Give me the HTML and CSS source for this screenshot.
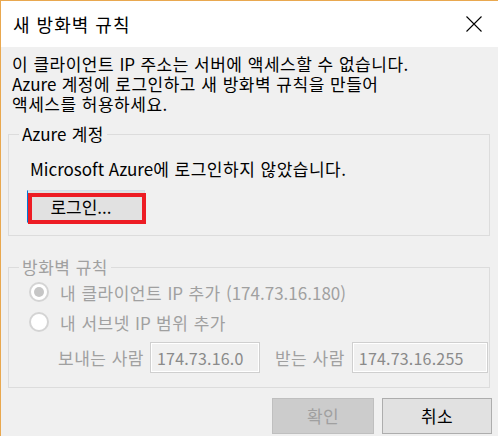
FILE: index.html
```html
<!DOCTYPE html>
<html lang="ko">
<head>
<meta charset="utf-8">
<title>새 방화벽 규칙</title>
<link rel="stylesheet" href="styles.css">
</head>
<body>
<div class="window">
  <div class="titlebar">
    <span class="title">새 방화벽 규칙</span>
    <svg class="close" width="16" height="16" viewBox="0 0 16 16" aria-label="닫기"><path d="M0.5 0.5 L15.5 15.5 M15.5 0.5 L0.5 15.5" stroke="#000" stroke-width="1.1" fill="none"/></svg>
  </div>
  <div class="content">
    <p class="msg">이 클라이언트 <span class="en">IP</span> 주소는 서버에 액세스할 수 없습니다.<br><span class="en">Azure</span> 계정에 로그인하고 새 방화벽 규칙을 만들어<br>액세스를 허용하세요.</p>
    <fieldset class="group account">
      <legend><span class="en">Azure</span> 계정</legend>
      <div class="status"><span class="en">Microsoft Azure</span>에 로그인하지 않았습니다.</div>
      <div class="login-wrap">
        <button class="btn login" type="button">로그인...</button>
        <span class="mark"></span>
      </div>
    </fieldset>
    <fieldset class="group rules">
      <legend>방화벽 규칙</legend>
      <div class="radio"><span class="dot checked"></span><span>내 클라이언트 <span class="en">IP</span> 추가 <span class="en">(174.73.16.180)</span></span></div>
      <div class="radio"><span class="dot"></span><span>내 서브넷 <span class="en">IP</span> 범위 추가</span></div>
      <div class="range">
        <span class="lbl">보내는 사람</span><span class="field from">174.73.16.0</span>
        <span class="lbl to-lbl">받는 사람</span><span class="field to">174.73.16.255</span>
      </div>
    </fieldset>
    <div class="actions">
      <button class="btn ok" type="button" disabled>확인</button>
      <button class="btn cancel" type="button">취소</button>
    </div>
  </div>
</div>
</body>
</html>
```

FILE: styles.css
```css
* { box-sizing: border-box; }
html, body { margin: 0; padding: 0; }
body {
  font-family: "Noto Sans CJK KR", "Noto Sans", sans-serif;
  font-size: 17px;
  letter-spacing: 0.5px;
  color: #000;
  background: #f0f0f0;
}
.en { letter-spacing: 0; }
.window {
  height: 436px;
  border-top: 1px solid #e9a84f;
  border-left: 1px solid #e9a84f;
  background: #f0f0f0;
  overflow: hidden;
}
.titlebar {
  height: 46px;
  background: #fff;
  display: flex;
  align-items: center;
  justify-content: space-between;
  padding: 0 16px 0 12px;
}
.title {
  font-size: 18px;
  letter-spacing: 1px;
  line-height: 24px;
}
.close { display: block; }
.content {
  padding: 0 8px 0 7px;
}
.msg {
  margin: 0;
  padding: 7px 0 0 4px;
  line-height: 20px;
}
.group {
  margin: 10px 0 0 0;
  border: 1px solid #dcdcdc;
  padding: 0 0 12px 18px;
  min-width: 0;
}
.group legend {
  line-height: 20px;
  padding: 0 3px;
  margin-left: -8px;
}
.status {
  margin-top: 15px;
  margin-left: 3px;
  line-height: 20px;
}
.login-wrap {
  position: relative;
  width: 120px;
  margin-top: 11px;
}
.btn {
  font-family: inherit;
  font-size: 17px;
  letter-spacing: 0.4px;
  line-height: 20px;
  margin: 0;
  padding: 0;
  color: #000;
  background: #e1e1e1;
  border: 1px solid #adadad;
}
.login {
  display: block;
  width: 118px;
  height: 33px;
  padding-right: 10px;
  border-color: #d3dde8;
  border-left-color: #0078d7;
  letter-spacing: 0;
}
.mark {
  position: absolute;
  left: 1px;
  top: 3px;
  width: 118px;
  height: 31px;
  border: 4px solid #ed1c24;
}
.rules {
  margin-top: 21px;
  padding: 0 0 14px 20px;
  color: #a0a0a0;
}
.rules legend { margin-left: -10px; }
.radio {
  height: 30px;
  display: flex;
  align-items: center;
  gap: 11px;
}
.dot {
  width: 20px;
  height: 20px;
  border-radius: 50%;
  border: 2px solid #d4d4d4;
  background: #fff;
  display: flex;
  align-items: center;
  justify-content: center;
}
.dot.checked::after {
  content: "";
  width: 10px;
  height: 10px;
  border-radius: 50%;
  background: #c6c6c6;
}
.range {
  display: flex;
  align-items: center;
  margin: 5px 0 0 29px;
}
.field {
  height: 31px;
  border: 1px solid #cfcfcf;
  box-shadow: inset 0 0 0 1px #fff;
  padding: 0 0 0 6px;
  display: flex;
  align-items: center;
  color: #8a8a8a;
  font-size: 16px;
  letter-spacing: 0.2px;
}
.from { width: 110px; margin-left: 6px; }
.to-lbl { margin-left: 15px; }
.to { width: 136px; margin-left: 7px; }
.actions {
  display: flex;
  justify-content: flex-end;
  gap: 8px;
  margin: 10px -2px 0 0;
}
.actions .btn { height: 36px; }
.ok {
  width: 102px;
  background: #cccccc;
  border-color: #bfbfbf;
  color: #a0a0a0;
}
.cancel { width: 110px; }
```
